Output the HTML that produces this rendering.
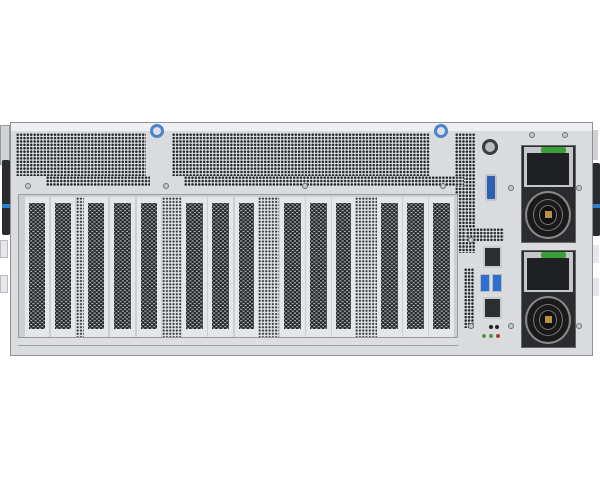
<!DOCTYPE html>
<html><head><style>
body{margin:0;width:600px;height:480px;background:#fff;position:relative;overflow:hidden;font-family:"Liberation Sans",sans-serif}
div{position:absolute;box-sizing:border-box}
.ch{left:10px;top:122px;width:583px;height:234px;background:#d9dbde;border:1px solid #8d9096}
.topper{background-color:#dfe1e3;background-image:linear-gradient(90deg,transparent 1.4px,#dfe1e3 1.4px),linear-gradient(0deg,#2a2c30 1.8px,#dfe1e3 1.8px);background-size:3.4px 3.4px}
.topper{background-image:radial-gradient(circle at center,#26282c 1.1px,transparent 1.5px);background-size:3.4px 3.4px}
.hex{background-color:#c9ccd0;background-image:radial-gradient(circle at center,#222428 1.2px,transparent 1.6px),radial-gradient(circle at center,#222428 1.2px,transparent 1.6px);background-size:4.4px 3.8px;background-position:0 0,2.2px 1.9px;border:4px solid #e4e6e8;border-top-width:6px;border-bottom-width:8px;background-clip:padding-box;background-origin:padding-box}
.sq{background-color:#dfe1e3;background-image:radial-gradient(circle at center,#303236 0.9px,transparent 1.2px);background-size:3.3px 3.3px}
.screw{width:6px;height:6px;border-radius:50%;background:#c5c7ca;border:1px solid #6d7075}
</style></head><body>
<!-- left handle -->
<div style="left:0;top:125px;width:10px;height:40px;background:#d0d2d5;border:1px solid #999"></div>
<div style="left:2px;top:160px;width:8px;height:75px;background:#2a2c30;border-radius:2px"></div>
<div style="left:2px;top:204px;width:8px;height:4px;background:#2d7fd0"></div>
<div style="left:0;top:240px;width:8px;height:18px;background:#e6e7e9;border:1px solid #bbb"></div>
<div style="left:0;top:275px;width:8px;height:18px;background:#e6e7e9;border:1px solid #bbb"></div>
<!-- right handle -->
<div style="left:592px;top:130px;width:6px;height:30px;background:#cfd1d4"></div>
<div style="left:592px;top:163px;width:8px;height:73px;background:#2a2c30;border-radius:2px"></div>
<div style="left:592px;top:204px;width:8px;height:4px;background:#2d7fd0"></div>
<div style="left:592px;top:245px;width:7px;height:18px;background:#e6e7e9"></div>
<div style="left:592px;top:278px;width:7px;height:18px;background:#e6e7e9"></div>

<div class="ch"></div>
<div style="left:11px;top:123px;width:581px;height:8px;background:#eeeff1"></div>
<!-- top perforation -->
<div class="topper" style="left:16px;top:133px;width:130px;height:43px"></div>
<div class="topper" style="left:172px;top:133px;width:258px;height:43px"></div>
<div class="topper" style="left:455px;top:133px;width:20px;height:120px"></div>
<div class="topper" style="left:46px;top:176px;width:104px;height:10px"></div>
<div class="topper" style="left:184px;top:176px;width:280px;height:10px"></div>
<div class="topper" style="left:466px;top:228px;width:38px;height:14px"></div>
<div class="topper" style="left:464px;top:268px;width:10px;height:60px"></div>
<!-- blue thumbscrews -->
<div style="left:150px;top:124px;width:14px;height:14px;border-radius:50%;border:3px solid #4a85c8;background:#dde"></div>
<div style="left:434px;top:124px;width:14px;height:14px;border-radius:50%;border:3px solid #4a85c8;background:#dde"></div>
<!-- screws -->
<div class="screw" style="left:25px;top:183px"></div>
<div class="screw" style="left:163px;top:183px"></div>
<div class="screw" style="left:302px;top:183px"></div>
<div class="screw" style="left:440px;top:183px"></div>
<div class="screw" style="left:468px;top:237px"></div>
<div class="screw" style="left:468px;top:323px"></div>
<div class="screw" style="left:508px;top:323px"></div>
<div class="screw" style="left:576px;top:323px"></div>
<div class="screw" style="left:508px;top:185px"></div>
<div class="screw" style="left:576px;top:185px"></div>
<div class="screw" style="left:529px;top:132px"></div>
<div class="screw" style="left:562px;top:132px"></div>
<!-- slot area -->
<div style="left:18px;top:194px;width:440px;height:152px;background:#cbced2;border:1px solid #9a9da2"></div>
<div class="hex" style="left:25px;top:197px;width:24px;height:140px"></div>
<div class="hex" style="left:51px;top:197px;width:24px;height:140px"></div>
<div class="sq" style="left:76px;top:197px;width:8px;height:145px"></div>
<div class="hex" style="left:84px;top:197px;width:24px;height:140px"></div>
<div class="hex" style="left:110px;top:197px;width:25px;height:140px"></div>
<div class="hex" style="left:137px;top:197px;width:24px;height:140px"></div>
<div class="sq" style="left:162px;top:197px;width:20px;height:145px"></div>
<div class="hex" style="left:182px;top:197px;width:25px;height:140px"></div>
<div class="hex" style="left:208px;top:197px;width:25px;height:140px"></div>
<div class="hex" style="left:235px;top:197px;width:23px;height:140px"></div>
<div class="sq" style="left:258px;top:197px;width:21px;height:145px"></div>
<div class="hex" style="left:280px;top:197px;width:25px;height:140px"></div>
<div class="hex" style="left:306px;top:197px;width:25px;height:140px"></div>
<div class="hex" style="left:332px;top:197px;width:23px;height:140px"></div>
<div class="sq" style="left:355px;top:197px;width:22px;height:145px"></div>
<div class="hex" style="left:377px;top:197px;width:25px;height:140px"></div>
<div class="hex" style="left:403px;top:197px;width:25px;height:140px"></div>
<div class="hex" style="left:429px;top:197px;width:25px;height:140px"></div>
<div style="left:18px;top:337px;width:440px;height:8px;background:#dcdee1;border-top:1px solid #999"></div>
<!-- IO -->
<div style="left:482px;top:139px;width:16px;height:16px;border-radius:50%;background:#3a3c40"></div>
<div style="left:485px;top:142px;width:10px;height:10px;border-radius:50%;background:#b9bbbe"></div>
<div style="left:485px;top:174px;width:12px;height:27px;border-radius:3px;background:#2e5fb0;border:2px solid #c0c2c6"></div>
<div style="left:483px;top:246px;width:19px;height:22px;background:#2b2d31;border:2px solid #c8cacd"></div>
<div style="left:480px;top:274px;width:10px;height:18px;background:#2f6fd0;border:1px solid #bbb"></div>
<div style="left:492px;top:274px;width:10px;height:18px;background:#2f6fd0;border:1px solid #bbb"></div>
<div style="left:483px;top:297px;width:19px;height:22px;background:#2b2d31;border:2px solid #c8cacd"></div>
<div style="left:489px;top:325px;width:4px;height:4px;border-radius:50%;background:#222"></div>
<div style="left:495px;top:325px;width:4px;height:4px;border-radius:50%;background:#222"></div>
<div style="left:482px;top:334px;width:4px;height:4px;border-radius:50%;background:#4a9a4a"></div>
<div style="left:489px;top:334px;width:4px;height:4px;border-radius:50%;background:#4a9a4a"></div>
<div style="left:496px;top:334px;width:4px;height:4px;border-radius:50%;background:#b33"></div>
<!-- PSUs -->
<div style="left:521px;top:145px;width:55px;height:98px;background:#2a2c30;border:1px solid #666"></div>
<div style="left:524px;top:147px;width:49px;height:40px;background:#c4c6c9"></div>
<div style="left:527px;top:153px;width:42px;height:32px;background:#1e2024"></div>
<div style="left:541px;top:147px;width:25px;height:6px;background:#3aa03a;border-radius:2px"></div>
<div style="left:525px;top:191px;width:46px;height:48px;border-radius:50%;background:#111;border:2px solid #888;box-shadow:inset 0 0 0 6px #1a1a1a,inset 0 0 0 7px #777,inset 0 0 0 12px #1a1a1a,inset 0 0 0 13px #777"></div>
<div style="left:545px;top:211px;width:7px;height:7px;background:#b8904a"></div>
<div style="left:521px;top:250px;width:55px;height:98px;background:#2a2c30;border:1px solid #666"></div>
<div style="left:524px;top:252px;width:49px;height:40px;background:#c4c6c9"></div>
<div style="left:527px;top:258px;width:42px;height:32px;background:#1e2024"></div>
<div style="left:541px;top:252px;width:25px;height:6px;background:#3aa03a;border-radius:2px"></div>
<div style="left:525px;top:296px;width:46px;height:48px;border-radius:50%;background:#111;border:2px solid #888;box-shadow:inset 0 0 0 6px #1a1a1a,inset 0 0 0 7px #777,inset 0 0 0 12px #1a1a1a,inset 0 0 0 13px #777"></div>
<div style="left:545px;top:316px;width:7px;height:7px;background:#b8904a"></div>
</body></html>
